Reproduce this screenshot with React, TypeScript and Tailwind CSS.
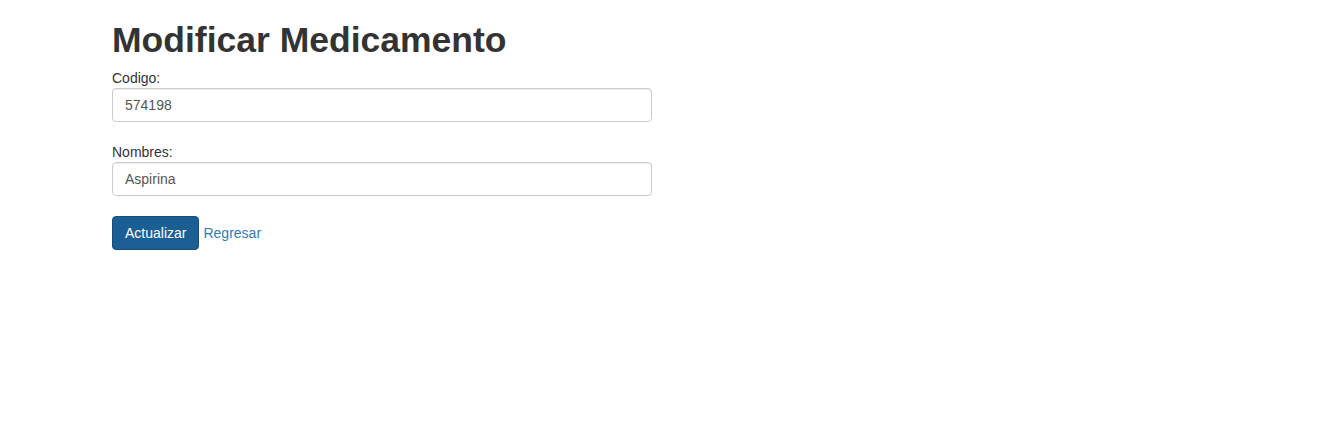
import React from "react";

const App = () => {
  return (
    <div className="min-h-screen bg-white pl-[112px] font-['Liberation_Sans',Arial,sans-serif] text-[14px] text-[#333]">
      <div className="w-[540px]">
        <h1 className="mt-[20px] mb-[8px] text-[35.5px] leading-[40px] font-bold">Modificar Medicamento</h1>
        <div className="mb-5">
          <label className="block leading-5">Codigo:</label>
          <input
            className="block h-[34px] w-full rounded-[4px] border border-[#ccc] px-3 text-[14px] text-[#555] shadow-[inset_0_1px_1px_rgba(0,0,0,0.075)] outline-none"
            defaultValue="574198"
          />
        </div>
        <div className="mb-5">
          <label className="block leading-5">Nombres:</label>
          <input
            className="block h-[34px] w-full rounded-[4px] border border-[#ccc] px-3 text-[14px] text-[#555] shadow-[inset_0_1px_1px_rgba(0,0,0,0.075)] outline-none"
            defaultValue="Aspirina"
          />
        </div>
        <div className="flex items-center">
          <button className="h-[34px] rounded-[4px] border border-[#164d7a] bg-[#1b5e94] px-3 text-[14px] text-white">
            Actualizar
          </button>
          <a href="#" className="ml-[4px] text-[#337ab7]">Regresar</a>
        </div>
      </div>
    </div>
  );
};

export default App;
